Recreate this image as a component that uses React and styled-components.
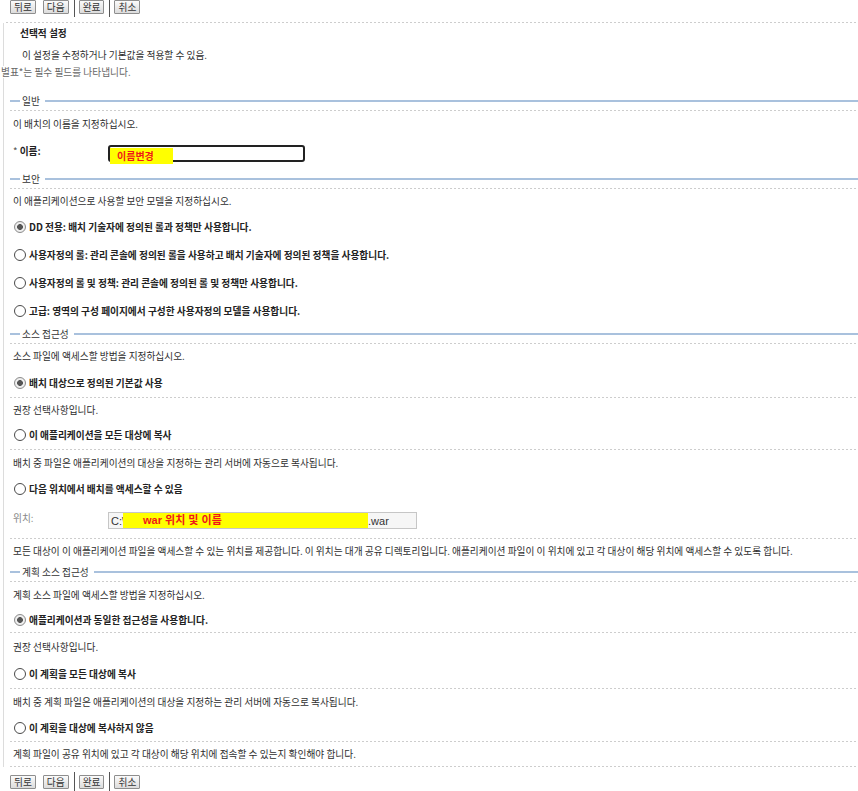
import React from 'react';
import styled, { createGlobalStyle, css } from 'styled-components';

const GlobalStyle = createGlobalStyle`
  * { box-sizing: border-box; }
  body {
    margin: 0;
    background: #fff;
    color: #2e2e2e;
    font-family: "Noto Sans CJK KR", "Noto Sans", sans-serif;
    font-size: 9.7px;
  }
`;

const dotted = css`
  background: linear-gradient(to right, #cdcdcd 50%, transparent 50%) left bottom / 4px 1px repeat-x;
`;

const Page = styled.div`
  width: 858px;
`;

const Toolbar = styled.div`
  display: flex;
  align-items: flex-start;
  margin-left: 6px;
  padding-left: 4px;
  ${(p) =>
    p.$top
      ? css`
          height: 26px;
          margin-top: -3px;
          ${dotted}
        `
      : css`
          height: 24px;
          padding-top: 5px;
        `}
`;

const Button = styled.button`
  height: 14px;
  margin-top: 3px;
  padding: 0 3px;
  border: 1px solid #8e8e8e;
  border-radius: 1px;
  background: linear-gradient(#fbfbfb, #dcdcdc);
  color: #333;
  font-family: "Noto Sans CJK KR", sans-serif;
  font-size: 9.7px;
  line-height: 12px;
  & + & {
    margin-left: 7px;
  }
`;

const Separator = styled.span`
  width: 1px;
  height: 20px;
  margin: 0 4px 0 5px;
  background: #555;
`;

const Bordered = styled.div`
  margin-left: 3px;
  border-left: 1px solid #dcdcdc;
  padding-left: 6px;
  padding-top: ${(p) => p.$pt || 0}px;
`;

const Title = styled.div`
  height: 21px;
  line-height: 21px;
  padding-left: 10px;
  font-weight: bold;
  color: #222;
`;

const Intro = styled.div`
  height: 22px;
  line-height: 22px;
  padding-left: 12px;
`;

const Note = styled.div`
  height: 12px;
  line-height: 12px;
  padding-left: 1px;
  color: #666;
`;

const LegendRow = styled.div`
  display: flex;
  align-items: center;
  height: 19px;
  padding-bottom: 1px;
  ${dotted}
`;

const Dash = styled.span`
  width: 10px;
  height: 2px;
  background: #a9c1dd;
`;

const LegendText = styled.span`
  margin: 0 5px 0 2px;
  color: #333;
`;

const Rule = styled.span`
  flex: 1;
  height: 2px;
  background: #a9c1dd;
`;

const Row = styled.div`
  display: flex;
  align-items: ${(p) => (p.$top ? 'flex-start' : 'center')};
  height: ${(p) => p.$h}px;
  padding-left: 3px;
  padding-top: ${(p) => p.$pt || 0}px;
  white-space: nowrap;
  ${(p) =>
    p.$divider &&
    css`
      padding-bottom: 1px;
      ${dotted}
    `}
`;

const RadioMark = styled.span`
  flex-shrink: 0;
  width: 12px;
  height: 12px;
  margin-left: 1px;
  border-radius: 50%;
  border: 1px solid ${(p) => (p.$checked ? '#8c8c8c' : '#4a4a4a')};
  background: ${(p) =>
    p.$checked
      ? 'radial-gradient(circle, #555 0 2.6px, #f2f2f2 3.2px, #e2e2e2 100%)'
      : '#fff'};
`;

const OptionText = styled.span`
  margin-left: 3px;
  font-weight: bold;
  color: #222;
`;

const FieldLabel = styled.span`
  width: 95px;
  line-height: 12px;
  color: ${(p) => (p.$muted ? '#888' : '#222')};
  font-weight: ${(p) => (p.$muted ? 'normal' : 'bold')};
`;

const Star = styled.span`
  font-weight: normal;
  color: #555;
`;

const NameInput = styled.div`
  position: relative;
  width: 197px;
  height: 17px;
  border: 2px solid #222;
  border-radius: 3px;
  background: #fff;
`;

const NameMark = styled.span`
  position: absolute;
  left: 0;
  top: 1px;
  width: 63px;
  height: 16px;
  padding-left: 7px;
  background: #ffff00;
  color: #f01818;
  font-weight: bold;
  font-size: 10px;
  line-height: 16px;
`;

const PathInput = styled.div`
  display: flex;
  align-items: center;
  width: 309px;
  height: 17px;
  padding-left: 2px;
  border: 1px solid #c6c6c6;
  background: #f6f6f6;
  color: #333;
  font-family: "Liberation Sans", "Noto Sans CJK KR", sans-serif;
  font-size: 11px;
  overflow: hidden;
`;

const PathMark = styled.span`
  display: inline-block;
  width: 245px;
  height: 15px;
  margin-left: -2px;
  padding-left: 20px;
  background: #ffff00;
  color: #f01818;
  font-weight: bold;
  line-height: 15px;
`;

const sections = [
  {
    legend: '보안',
    rows: [
      { text: '이 애플리케이션으로 사용할 보안 모델을 지정하십시오.', h: 24 },
      { radio: true, checked: true, text: 'DD 전용: 배치 기술자에 정의된 롤과 정책만 사용합니다.', h: 28 },
      { radio: true, text: '사용자정의 롤: 관리 콘솔에 정의된 롤을 사용하고 배치 기술자에 정의된 정책을 사용합니다.', h: 28 },
      { radio: true, text: '사용자정의 롤 및 정책: 관리 콘솔에 정의된 롤 및 정책만 사용합니다.', h: 28 },
      { radio: true, text: '고급: 영역의 구성 페이지에서 구성한 사용자정의 모델을 사용합니다.', h: 28 },
    ],
  },
  {
    legend: '소스 접근성',
    rows: [
      { text: '소스 파일에 액세스할 방법을 지정하십시오.', h: 24 },
      { radio: true, checked: true, text: '배치 대상으로 정의된 기본값 사용', h: 30, divider: true },
      { text: '권장 선택사항입니다.', h: 23 },
      { radio: true, text: '이 애플리케이션을 모든 대상에 복사', h: 29, divider: true },
      { text: '배치 중 파일은 애플리케이션의 대상을 지정하는 관리 서버에 자동으로 복사됩니다.', h: 26 },
      { radio: true, text: '다음 위치에서 배치를 액세스할 수 있음', h: 26 },
      { location: true, h: 37, divider: true },
      {
        text: '모든 대상이 이 애플리케이션 파일을 액세스할 수 있는 위치를 제공합니다. 이 위치는 대개 공유 디렉토리입니다. 애플리케이션 파일이 이 위치에 있고 각 대상이 해당 위치에 액세스할 수 있도록 합니다.',
        h: 24,
      },
    ],
  },
  {
    legend: '계획 소스 접근성',
    rows: [
      { text: '계획 소스 파일에 액세스할 방법을 지정하십시오.', h: 26 },
      { radio: true, checked: true, text: '애플리케이션과 동일한 접근성을 사용합니다.', h: 25, divider: true },
      { text: '권장 선택사항입니다.', h: 27 },
      { radio: true, text: '이 계획을 모든 대상에 복사', h: 29, divider: true },
      { text: '배치 중 계획 파일은 애플리케이션의 대상을 지정하는 관리 서버에 자동으로 복사됩니다.', h: 25 },
      { radio: true, text: '이 계획을 대상에 복사하지 않음', h: 28, divider: true },
      { text: '계획 파일이 공유 위치에 있고 각 대상이 해당 위치에 접속할 수 있는지 확인해야 합니다.', h: 25, divider: true },
    ],
  },
];

function Buttons({ top }) {
  return (
    <Toolbar $top={top}>
      <Button>뒤로</Button>
      <Button>다음</Button>
      <Separator />
      <Button>완료</Button>
      <Separator />
      <Button>취소</Button>
    </Toolbar>
  );
}

function Legend({ children }) {
  return (
    <LegendRow>
      <Dash />
      <LegendText>{children}</LegendText>
      <Rule />
    </LegendRow>
  );
}

function SectionRow({ row }) {
  if (row.location) {
    return (
      <Row $h={row.h} $top $pt={10} $divider={row.divider}>
        <FieldLabel $muted>위치:</FieldLabel>
        <PathInput>
          C:\
          <PathMark>war 위치 및 이름</PathMark>
          .war
        </PathInput>
      </Row>
    );
  }
  if (row.radio) {
    return (
      <Row $h={row.h} $divider={row.divider}>
        <RadioMark $checked={row.checked} />
        <OptionText>{row.text}</OptionText>
      </Row>
    );
  }
  return (
    <Row $h={row.h} $divider={row.divider}>
      {row.text}
    </Row>
  );
}

export default function App() {
  return (
    <Page>
      <GlobalStyle />
      <Buttons top />
      <Bordered>
        <Title>선택적 설정</Title>
        <Intro>이 설정을 수정하거나 기본값을 적용할 수 있음.</Intro>
      </Bordered>
      <Note>별표*는 필수 필드를 나타냅니다.</Note>
      <Bordered $pt={14}>
        <Legend>일반</Legend>
        <Row $h={26}>이 배치의 이름을 지정하십시오.</Row>
        <Row $h={33} $top $pt={8}>
          <FieldLabel>
            <Star>* </Star>이름:
          </FieldLabel>
          <NameInput>
            <NameMark>이름변경</NameMark>
          </NameInput>
        </Row>
        {sections.map((section) => (
          <div key={section.legend}>
            <Legend>{section.legend}</Legend>
            {section.rows.map((row, i) => (
              <SectionRow key={i} row={row} />
            ))}
          </div>
        ))}
      </Bordered>
      <Buttons />
    </Page>
  );
}
